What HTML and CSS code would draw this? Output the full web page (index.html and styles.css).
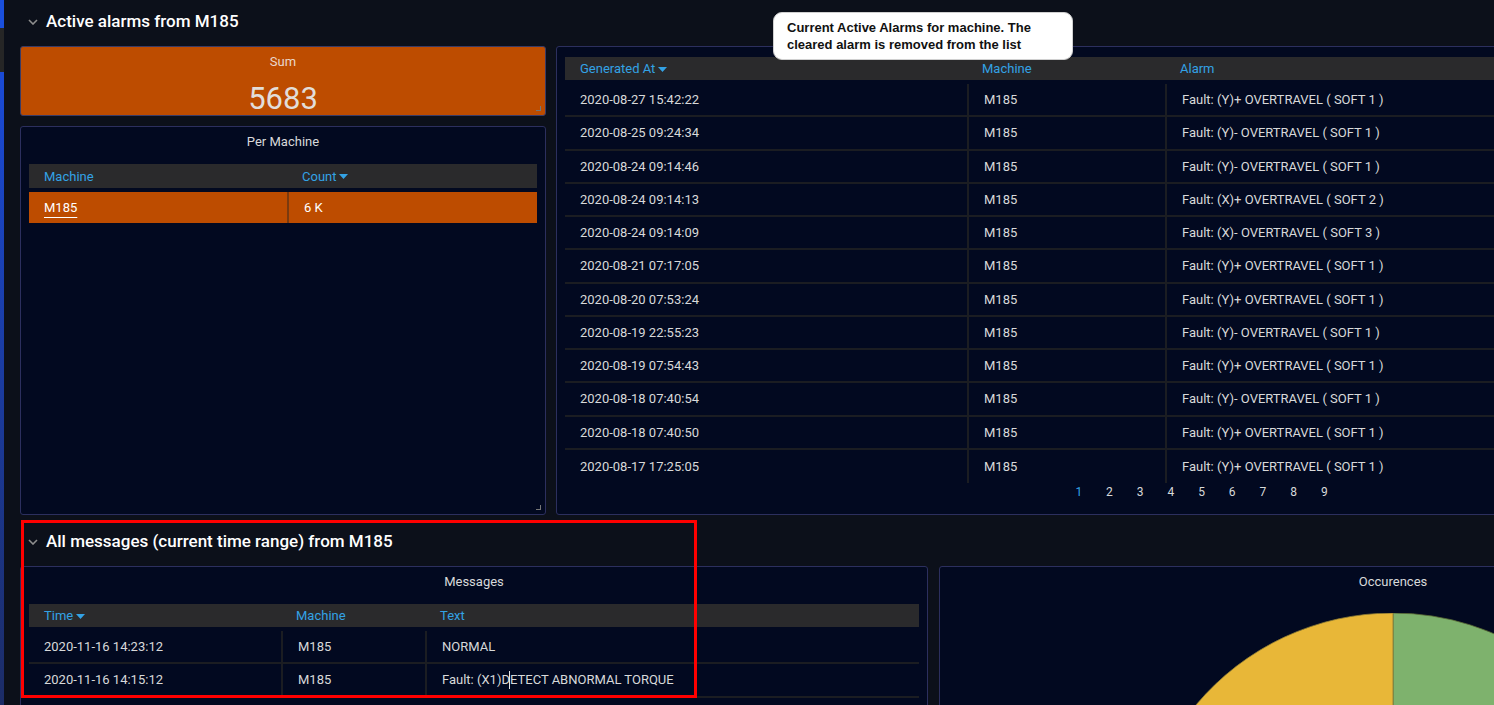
FILE: index.html
```html
<!DOCTYPE html>
<html lang="en">
<head>
<meta charset="utf-8">
<title>Active alarms</title>
<link rel="stylesheet" href="styles.css">
</head>
<body>
<div class="app">
  <div class="edge"></div>
  <div class="main">
    <div class="row-title">
      <svg class="chev" width="10" height="6" viewBox="0 0 10 6"><polyline points="1,1 5,5 9,1" fill="none" stroke="#8e8e8e" stroke-width="1.6"/></svg>
      <span>Active alarms from M185</span>
    </div>
    <div class="top-grid">
      <div class="left-col">
        <div class="panel sum">
          <div class="panel-title">Sum</div>
          <div class="sum-value">5683</div>
          <span class="resize"></span>
        </div>
        <div class="panel per-machine">
          <div class="panel-title">Per Machine</div>
          <div class="tbl tbl-pm">
            <div class="thead">
              <div class="th">Machine</div>
              <div class="th">Count <svg class="caret" width="9" height="5" viewBox="0 0 9 5"><polygon points="0,0 9,0 4.5,5" fill="#33a2e5"/></svg></div>
            </div>
            <div class="tr orange">
              <div class="td"><span class="link">M185</span></div>
              <div class="td sep">6 K</div>
            </div>
          </div>
          <span class="resize"></span>
        </div>
      </div>
      <div class="panel alarms">
        <div class="tbl tbl-alarms">
          <div class="thead">
            <div class="th">Generated At <svg class="caret" width="9" height="5" viewBox="0 0 9 5"><polygon points="0,0 9,0 4.5,5" fill="#33a2e5"/></svg></div>
            <div class="th">Machine</div>
            <div class="th">Alarm</div>
          </div>
          <div class="tr"><div class="td">2020-08-27 15:42:22</div><div class="td sep">M185</div><div class="td sep">Fault: (Y)+ OVERTRAVEL ( SOFT 1 )</div></div>
          <div class="tr"><div class="td">2020-08-25 09:24:34</div><div class="td sep">M185</div><div class="td sep">Fault: (Y)- OVERTRAVEL ( SOFT 1 )</div></div>
          <div class="tr"><div class="td">2020-08-24 09:14:46</div><div class="td sep">M185</div><div class="td sep">Fault: (Y)- OVERTRAVEL ( SOFT 1 )</div></div>
          <div class="tr"><div class="td">2020-08-24 09:14:13</div><div class="td sep">M185</div><div class="td sep">Fault: (X)+ OVERTRAVEL ( SOFT 2 )</div></div>
          <div class="tr"><div class="td">2020-08-24 09:14:09</div><div class="td sep">M185</div><div class="td sep">Fault: (X)- OVERTRAVEL ( SOFT 3 )</div></div>
          <div class="tr"><div class="td">2020-08-21 07:17:05</div><div class="td sep">M185</div><div class="td sep">Fault: (Y)+ OVERTRAVEL ( SOFT 1 )</div></div>
          <div class="tr"><div class="td">2020-08-20 07:53:24</div><div class="td sep">M185</div><div class="td sep">Fault: (Y)+ OVERTRAVEL ( SOFT 1 )</div></div>
          <div class="tr"><div class="td">2020-08-19 22:55:23</div><div class="td sep">M185</div><div class="td sep">Fault: (Y)- OVERTRAVEL ( SOFT 1 )</div></div>
          <div class="tr"><div class="td">2020-08-19 07:54:43</div><div class="td sep">M185</div><div class="td sep">Fault: (Y)+ OVERTRAVEL ( SOFT 1 )</div></div>
          <div class="tr"><div class="td">2020-08-18 07:40:54</div><div class="td sep">M185</div><div class="td sep">Fault: (Y)- OVERTRAVEL ( SOFT 1 )</div></div>
          <div class="tr"><div class="td">2020-08-18 07:40:50</div><div class="td sep">M185</div><div class="td sep">Fault: (Y)+ OVERTRAVEL ( SOFT 1 )</div></div>
          <div class="tr last"><div class="td">2020-08-17 17:25:05</div><div class="td sep">M185</div><div class="td sep">Fault: (Y)+ OVERTRAVEL ( SOFT 1 )</div></div>
        </div>
        <div class="pager">
          <span class="pg active">1</span><span class="pg">2</span><span class="pg">3</span><span class="pg">4</span><span class="pg">5</span><span class="pg">6</span><span class="pg">7</span><span class="pg">8</span><span class="pg">9</span>
        </div>
      </div>
    </div>
    <div class="row-title second">
      <svg class="chev" width="10" height="6" viewBox="0 0 10 6"><polyline points="1,1 5,5 9,1" fill="none" stroke="#8e8e8e" stroke-width="1.6"/></svg>
      <span>All messages (current time range) from M185</span>
    </div>
    <div class="bottom-grid">
      <div class="panel messages">
        <div class="panel-title">Messages</div>
        <div class="tbl tbl-msg">
          <div class="thead">
            <div class="th">Time <svg class="caret" width="9" height="5" viewBox="0 0 9 5"><polygon points="0,0 9,0 4.5,5" fill="#33a2e5"/></svg></div>
            <div class="th">Machine</div>
            <div class="th">Text</div>
          </div>
          <div class="tr"><div class="td">2020-11-16 14:23:12</div><div class="td sep">M185</div><div class="td sep">NORMAL</div></div>
          <div class="tr"><div class="td">2020-11-16 14:15:12</div><div class="td sep">M185</div><div class="td sep">Fault: (X1)D<span class="ibeam"></span>ETECT ABNORMAL TORQUE</div></div>
        </div>
      </div>
      <div class="panel occ">
        <div class="panel-title">Occurences</div>
        <svg class="pie" width="906" height="520" viewBox="0 0 906 520">
          <path d="M453 257 L453 0 A257 257 0 0 1 694.5 169.1 Z" fill="#7eb26d" stroke="#5a6b35" stroke-width="0.8"/>
          <path d="M453 257 L694.5 169.1 A257 257 0 0 1 540.9 498.5 Z" fill="#ea6460"/>
          <path d="M453 257 L540.9 498.5 A257 257 0 1 1 453 0 Z" fill="#e8b738" stroke="#8a7a35" stroke-width="0.8"/>
        </svg>
      </div>
    </div>
  </div>
  <div class="tooltip">Current Active Alarms for machine. The<br>cleared alarm is removed from the list</div>
  <div class="annot"></div>
</div>
</body>
</html>
```
FILE: styles.css
```css
html, body {
  margin: 0;
  padding: 0;
  background: #0c101a;
}
body {
  width: 1494px;
  height: 705px;
  overflow: hidden;
  font-family: "Roboto", "Inter", sans-serif;
  color: #d8d9da;
}
.app {
  position: relative;
  display: flex;
  width: 1494px;
  height: 705px;
  overflow: hidden;
}
.edge {
  flex: none;
  width: 4px;
  height: 705px;
  background: linear-gradient(to bottom, #1a4fdc 0, #1a4fdc 28px, #262626 28px, #262626 72px, #1a4ad6 72px, #1c2c66 705px);
}
.main {
  flex: none;
  width: 1843px;
  padding-left: 16px;
  box-sizing: border-box;
}
.row-title {
  height: 42px;
  margin-bottom: 4px;
  display: flex;
  align-items: center;
  gap: 8px;
  padding-left: 8px;
  font-size: 17px;
  color: #ffffff;
  font-weight: 500;
}
.row-title.second {
  margin-top: 5px;
}
.chev { flex: none; margin-top: 2px; }
.panel {
  position: relative;
  box-sizing: border-box;
  background: #020920;
  border: 1px solid #2c2f5e;
  border-radius: 3px;
}
.panel-title {
  padding-top: 8px;
  height: 14px;
  line-height: 14px;
  font-size: 13px;
  text-align: center;
  color: #d8d9da;
}
.top-grid {
  display: grid;
  grid-template-columns: 526px 1291px;
  gap: 10px;
  height: 469px;
}
.left-col {
  display: flex;
  flex-direction: column;
  gap: 10px;
}
.sum {
  height: 70px;
  background: #bd4c00;
  border-color: #3a3b66;
}
.sum .panel-title { color: #ead8cc; }
.sum-value {
  margin-top: 12px;
  font-size: 31px;
  line-height: 36px;
  text-align: center;
  color: #e2ddd9;
}
.resize {
  position: absolute;
  right: 4px;
  bottom: 4px;
  width: 4px;
  height: 4px;
  border-right: 1px solid #777;
  border-bottom: 1px solid #777;
}
.per-machine {
  flex: 1;
}
.tbl {
  font-size: 13px;
}
.thead {
  display: grid;
  background: #2a2a2c;
  color: #33a2e5;
  font-size: 13px;
}
.th {
  padding-left: 15px;
  display: flex;
  align-items: center;
  gap: 3px;
}
.tr {
  display: grid;
  border-bottom: 2px solid #1b1d22;
}
.td {
  padding-left: 15px;
  display: flex;
  align-items: center;
  white-space: nowrap;
}
.td.sep {
  border-left: 2px solid #1b1d22;
}
.caret { margin-top: 1px; }

.tbl-pm { margin: 15px 8px 0 8px; }
.tbl-pm .thead, .tbl-pm .tr { grid-template-columns: 258px 1fr; }
.tbl-pm .thead { height: 24px; }
.tbl-pm .tr { margin-top: 4px; height: 31px; border-bottom: none; }
.tr.orange { background: #bd4c00; color: #fff; }
.tr.orange .td.sep { border-left: 2px solid #7a3a0f; }
.link {
  text-decoration: underline;
  text-underline-offset: 5px;
  text-decoration-thickness: 1px;
}

.alarms {
  padding: 10px 8px 0 8px;
}
.tbl-alarms .thead, .tbl-alarms .tr { grid-template-columns: 402px 198px 1fr; }
.tbl-alarms .thead { height: 23px; margin-bottom: 4px; }
.tbl-alarms .tr { height: 31.25px; }
.tbl-alarms .tr.last { border-bottom: none; height: 33.25px; }
.pager {
  display: flex;
  justify-content: center;
  height: 18px;
  line-height: 18px;
  font-size: 12px;
  margin-top: 0px;
}
.pg {
  width: 30.7px;
  text-align: center;
  color: #d8d9da;
}
.pg.active { color: #33a2e5; }

.bottom-grid {
  display: grid;
  grid-template-columns: 908px 908px;
  gap: 11px;
  height: 160px;
}
.tbl-msg { margin: 15px 8px 0 8px; }
.tbl-msg .thead, .tbl-msg .tr { grid-template-columns: 252px 144px 1fr; }
.tbl-msg .thead { height: 23px; margin-bottom: 4px; }
.tbl-msg .tr { height: 31.3px; }
.ibeam {
  display: inline-block;
  width: 1px;
  height: 18px;
  background: #e6e6e6;
  margin: 0 -0.5px;
}
.occ {
  overflow: hidden;
}
.pie {
  display: block;
  margin-top: 24px;
}

.tooltip {
  position: absolute;
  left: 773px;
  top: 12px;
  width: 300px;
  height: 48px;
  box-sizing: border-box;
  padding: 7px 0 0 13px;
  background: #ffffff;
  border: 1px solid #d0d0d0;
  border-radius: 9px;
  font-family: "Liberation Sans", Arial, sans-serif;
  font-weight: bold;
  font-size: 13px;
  line-height: 16.5px;
  color: #111;
}
.annot {
  position: absolute;
  left: 21px;
  top: 520px;
  width: 676px;
  height: 178px;
  box-sizing: border-box;
  border: 3px solid #ff0000;
}
```
